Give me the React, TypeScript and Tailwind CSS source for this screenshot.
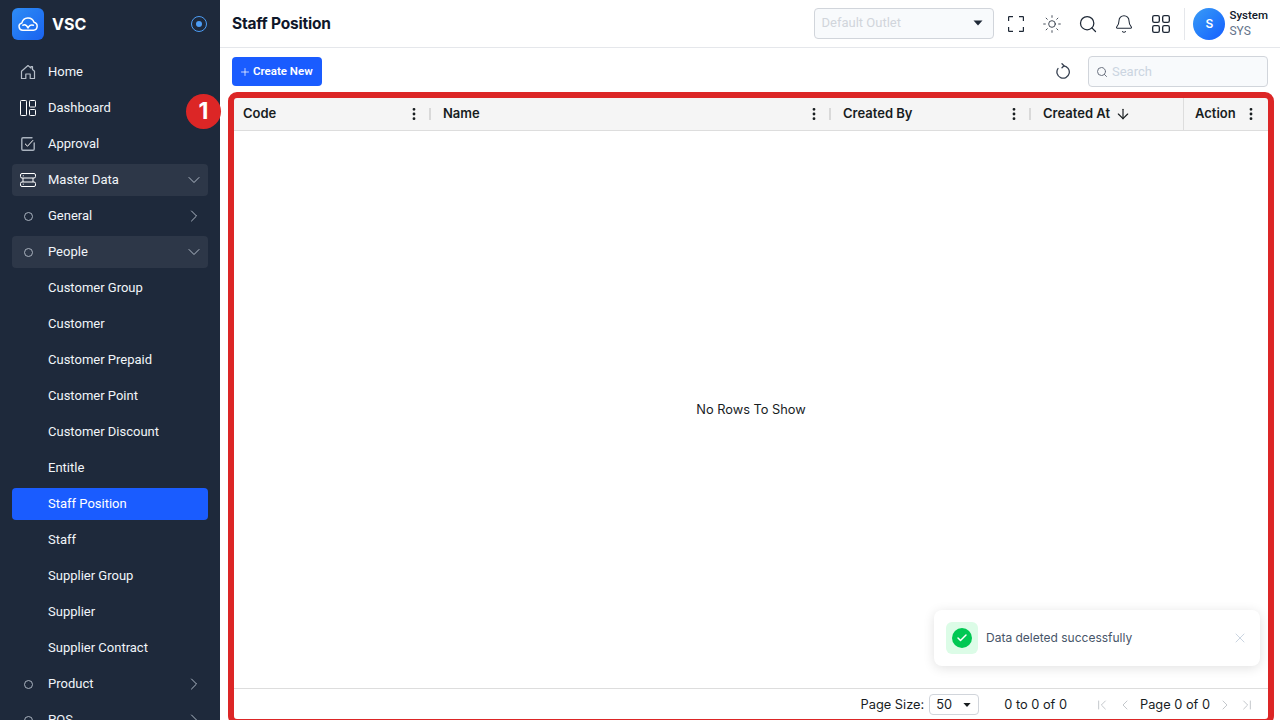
import {
  ArrowDown,
  Bell,
  Check,
  ChevronDown,
  ChevronFirst,
  ChevronLast,
  ChevronLeft,
  ChevronRight,
  EllipsisVertical,
  Plus,
  Search,
  Sun,
  X,
} from "lucide-react";

const Caret = ({ className }: { className: string }) => (
  <svg viewBox="0 0 10 6" className={className} fill="currentColor">
    <path d="M0.5 0.5h9L5 5.5z" />
  </svg>
);

const HomeIcon = () => (
  <svg viewBox="0 0 16 16" className="w-4 h-4 text-[#b6bec9]" fill="none" stroke="currentColor" strokeWidth="1.200" strokeLinejoin="round">
    <path d="M1.500 7.200 8 1.500l3 2.600V2.500h1.500v3l2 1.700v7.300h-4.300V10H5.800v4.500H1.500z" />
  </svg>
);

const DashIcon = () => (
  <svg viewBox="0 0 16 16" className="w-4 h-4 text-white" fill="none" stroke="currentColor" strokeWidth="1">
    <rect x="0.5" y="0.5" width="6" height="15" rx="0.8" />
    <rect x="9.500" y="0.5" width="6" height="6.500" rx="0.8" />
    <rect x="9.500" y="9.500" width="6" height="6" rx="0.8" />
  </svg>
);

const ApprovalIcon = () => (
  <svg viewBox="0 0 16 16" className="w-4 h-4" fill="none" strokeLinecap="round" strokeLinejoin="round">
    <path d="M12 1.800H3a1.200 1.200 0 0 0-1.200 1.200v10A1.200 1.200 0 0 0 3 14.200h10a1.200 1.200 0 0 0 1.200-1.200V7" stroke="#aab3bf" strokeWidth="1.400" />
    <path d="m5.300 8 2.200 2.200 5.300-5.700" stroke="#ffffff" strokeWidth="1" />
  </svg>
);

const ServerIcon = () => (
  <svg viewBox="0 0 16 16" className="w-4 h-4 text-white" fill="none" stroke="currentColor" strokeWidth="1">
    <rect x="0.5" y="1.500" width="15" height="4.500" rx="1.500" />
    <rect x="0.5" y="10" width="15" height="4.500" rx="1.500" />
    <path d="M3 6v4M13 6v4" />
    <path d="M2.800 3.800h1M2.800 12.200h1" />
  </svg>
);

const Logo = () => (
  <div className="w-8 h-8 rounded-md bg-gradient-to-br from-[#2f8cf5] to-[#1b62f0] flex items-center justify-center">
    <svg viewBox="0 0 24 24" className="w-6 h-6" fill="none" stroke="white" strokeWidth="1.500" strokeLinecap="round" strokeLinejoin="round">
      <path d="M6.800 18.200a3.700 3.700 0 0 1-.9-7.300A6.300 6.300 0 0 1 18 10.300a4 4 0 0 1-.6 7.900z" />
      <path d="M6.800 13.200c2.400-1 4.300.7 5.200 2.800.9-2.200 3-3.800 5.400-2.800" />
    </svg>
  </div>
);

const FullscreenIcon = () => (
  <svg viewBox="0 0 16 16" className="w-[16px] h-[16px]" fill="none" stroke="currentColor" strokeWidth="1.200">
    <path d="M0.600 5V1.200a.6.600 0 0 1 .6-.6H5M11 .6h3.800a.6.600 0 0 1 .6.6V5M15.400 11v3.800a.6.600 0 0 1-.6.6H11M5 15.400H1.200a.6.600 0 0 1-.6-.6V11" />
  </svg>
);

const RefreshIcon = () => (
  <svg viewBox="0 0 16 16" className="w-4 h-4 text-[#374151]" fill="none" stroke="currentColor" strokeWidth="1.300" strokeLinecap="round" strokeLinejoin="round">
    <path d="M8.500 2.800A6.200 6.200 0 1 1 3 5.500" />
    <path d="M7 0.800 9 2.800 7 4.800" />
  </svg>
);

type Item = { label: string; icon?: React.ReactNode; chevron?: "down" | "right"; open?: boolean; active?: boolean };

const dot = <span className="w-[9px] h-[9px] rounded-full border border-[#aab3bf]" />;

const items: Item[] = [
  { label: "Home", icon: <HomeIcon /> },
  { label: "Dashboard", icon: <DashIcon /> },
  { label: "Approval", icon: <ApprovalIcon /> },
  { label: "Master Data", icon: <ServerIcon />, chevron: "down", open: true },
  { label: "General", icon: dot, chevron: "right" },
  { label: "People", icon: dot, chevron: "down", open: true },
  { label: "Customer Group" },
  { label: "Customer" },
  { label: "Customer Prepaid" },
  { label: "Customer Point" },
  { label: "Customer Discount" },
  { label: "Entitle" },
  { label: "Staff Position", active: true },
  { label: "Staff" },
  { label: "Supplier Group" },
  { label: "Supplier" },
  { label: "Supplier Contract" },
  { label: "Product", icon: dot, chevron: "right" },
  { label: "POS", icon: dot, chevron: "right" },
];

function Sidebar() {
  return (
    <aside className="w-[220px] shrink-0 h-[720px] overflow-hidden bg-[#1e293b] font-['Roboto',sans-serif]">
      <div className="h-8 mt-2 pl-3 pr-[13px] flex items-center">
        <Logo />
        <span className="ml-[8px] text-[16px] font-bold text-white font-['Inter',sans-serif]">VSC</span>
        <span className="ml-auto w-4 h-4 rounded-full border border-[#4d9df5] flex items-center justify-center">
          <span className="w-1.5 h-1.5 rounded-full bg-[#4d9df5]" />
        </span>
      </div>
      <nav className="mt-4 px-3 flex flex-col gap-1">
        {items.map((item) => (
          <div
            key={item.label}
            className={`h-8 shrink-0 rounded flex items-center text-[13px] font-[450] text-[#f1f5f9] ${
              item.active ? "bg-[#1a5cff] text-white" : item.open ? "bg-[#2d3748]" : ""
            }`}
          >
            <span className="w-8 mr-1 flex justify-center shrink-0">{item.icon}</span>
            <span>{item.label}</span>
            {item.chevron === "down" && <ChevronDown className="ml-auto mr-1 w-5 h-5 text-[#cbd5e1]" strokeWidth={1} />}
            {item.chevron === "right" && <ChevronRight className="ml-auto mr-1 w-5 h-5 text-[#cbd5e1]" strokeWidth={1} />}
          </div>
        ))}
      </nav>
    </aside>
  );
}

function Topbar() {
  return (
    <header className="h-12 shrink-0 border-b border-[#e5e7eb] flex items-center pl-3 pr-3 font-['Inter',sans-serif]">
      <h1 className="text-[15.500px] font-bold text-[#0f172a] tracking-[-0.2px]">Staff Position</h1>
      <div className="ml-auto -mt-px w-[180px] h-[31px] rounded border border-[#d1d5db] bg-[#f8fafc] flex items-center pl-[6px] pr-[10px]">
        <span className="-mt-px text-[13px] text-[#d1d5db] font-['Roboto',sans-serif]">Default Outlet</span>
        <Caret className="ml-auto w-2.5 h-1.5 text-[#1f2937]" />
      </div>
      <div className="ml-[12px] flex items-center gap-[16px] text-[#1f2937]">
        <span className="w-5 h-5 flex items-center justify-center">
          <FullscreenIcon />
        </span>
        <Sun className="w-5 h-5" strokeWidth={1} />
        <Search className="w-5 h-5" strokeWidth={1.5} />
        <Bell className="w-5 h-5" strokeWidth={1.25} />
        <svg viewBox="0 0 18 18" className="ml-px w-5 h-5" fill="none" stroke="currentColor" strokeWidth="1.200">
          <rect x="1.500" y="1.500" width="6" height="6" rx="1.500" />
          <rect x="10.500" y="1.500" width="6" height="6" rx="1.500" />
          <rect x="1.500" y="10.500" width="6" height="6" rx="1.500" />
          <rect x="10.500" y="10.500" width="6" height="6" rx="1.500" />
        </svg>
      </div>
      <div className="ml-[13px] h-8 border-l border-[#e5e7eb] pl-2 flex items-center">
        <div className="w-8 h-8 rounded-full bg-gradient-to-br from-[#3b9bf5] to-[#1a5cff] flex items-center justify-center text-white text-[12px] font-semibold">
          S
        </div>
        <div className="ml-1 -mt-px leading-4 font-['Roboto',sans-serif]">
          <div className="text-[11.500px] font-medium text-[#0f172a]">System</div>
          <div className="text-[12px] text-[#64748b]">SYS</div>
        </div>
      </div>
    </header>
  );
}

function Column({ label, className }: { label: string; className: string }) {
  return (
    <div className={`h-full shrink-0 flex items-center pr-[1px] ${className}`}>
      <span className="font-semibold">{label}</span>
      <EllipsisVertical className="ml-auto w-4 h-4 mr-[7px]" strokeWidth={2.25} />
      <span className="w-0.5 h-3 bg-[#d9d9d9]" />
    </div>
  );
}

function Table() {
  return (
    <div className="relative flex-1 min-h-0 ml-[14px] mr-3 mt-[3px] flex flex-col text-[13px] text-[#181d1f] font-['Inter',sans-serif]">
      <div className="h-[33px] shrink-0 bg-[#f5f5f5] border-b border-[#dddddd] flex items-center">
        <Column label="Code" className="w-[198px] pl-[9px]" />
        <Column label="Name" className="w-[400px] pl-[11px]" />
        <Column label="Created By" className="w-[200px] pl-[11px]" />
        <div className="h-full w-[151px] shrink-0 flex items-center pl-[11px]">
          <span className="font-semibold">Created At</span>
          <ArrowDown className="ml-[5px] w-4 h-4" strokeWidth={1.75} />
        </div>
        <div className="h-full flex-1 border-l border-[#dddddd] flex items-center pl-[11px]">
          <span className="font-semibold">Action</span>
          <EllipsisVertical className="ml-auto w-4 h-4 mr-[9px]" strokeWidth={2.25} />
        </div>
      </div>
      <div className="flex-1 flex items-center justify-center text-[12.800px]">No Rows To Show</div>
      <div className="h-[32px] shrink-0 border-t border-[#dddddd] flex items-center justify-end pr-[13px] text-[12.800px]">
        <span>Page Size:</span>
        <div className="ml-[5px] w-[50px] h-[21px] rounded border border-[#d1d5db] flex items-center pl-[6px] pr-[7px]">
          50
          <Caret className="ml-auto w-2 h-1.5 text-[#181d1f]" />
        </div>
        <span className="ml-[25px]">0 to 0 of 0</span>
        <ChevronFirst className="ml-[27px] w-4 h-4 text-[#c4c8cc]" strokeWidth={1.5} />
        <ChevronLeft className="ml-[7px] w-4 h-4 text-[#c4c8cc]" strokeWidth={1.5} />
        <span className="ml-[7px]">Page 0 of 0</span>
        <ChevronRight className="ml-[7px] w-4 h-4 text-[#c4c8cc]" strokeWidth={1.5} />
        <ChevronLast className="ml-[6px] w-4 h-4 text-[#c4c8cc]" strokeWidth={1.5} />
      </div>
    </div>
  );
}

export default function App() {
  return (
    <div className="relative h-[720px] w-[1280px] overflow-hidden flex bg-white">
      <Sidebar />
      <main className="flex-1 min-w-0 flex flex-col">
        <Topbar />
        <div className="h-[38px] mt-[9px] shrink-0 pl-3 pr-3 flex items-start font-['Roboto',sans-serif]">
          <button className="h-[29px] w-[90px] rounded bg-[#1a5cff] text-white text-[11.500px] font-semibold flex items-center pl-[7px] gap-[2px]">
            <Plus className="w-3 h-3" strokeWidth={1.5} />
            Create New
          </button>
          <span className="ml-auto mt-[6px]">
            <RefreshIcon />
          </span>
          <div className="ml-[17px] w-[180px] h-[31px] -mt-[1px] rounded border border-[#d1d5db] bg-[#f8fafc] flex items-center pl-[7px] gap-[4px]">
            <Search className="w-3 h-3 text-[#6b7280]" />
            <span className="text-[13px] text-[#cbd5e1]">Search</span>
          </div>
        </div>
        <Table />
      </main>

      {/* annotation over the grid */}
      <div className="absolute left-[228px] top-[92px] w-[1046px] h-[633px] rounded-[9px] border-[6px] border-[#dc2626]" />
      <div className="absolute left-[186px] top-[94px] w-[35px] h-[35px] rounded-full bg-[#dc2626] flex items-center justify-center text-white text-[23px] font-bold font-['Inter',sans-serif]">
        1
      </div>

      {/* toast */}
      <div className="absolute left-[934px] top-[610px] w-[326px] h-[56px] rounded-lg bg-white shadow-[0_2px_12px_rgba(0,0,0,0.12)] flex items-center pl-3 pr-[12px] font-['Inter',sans-serif]">
        <div className="w-8 h-8 rounded-md bg-[#dcfce7] flex items-center justify-center">
          <div className="w-5 h-5 rounded-full bg-[#00c853] flex items-center justify-center">
            <Check className="w-3 h-3 text-white" strokeWidth={3} />
          </div>
        </div>
        <span className="ml-2 text-[12px] text-[#475569]">Data deleted successfully</span>
        <X className="ml-auto w-4 h-4 text-[#cbd5e1]" strokeWidth={1.5} />
      </div>
    </div>
  );
}
